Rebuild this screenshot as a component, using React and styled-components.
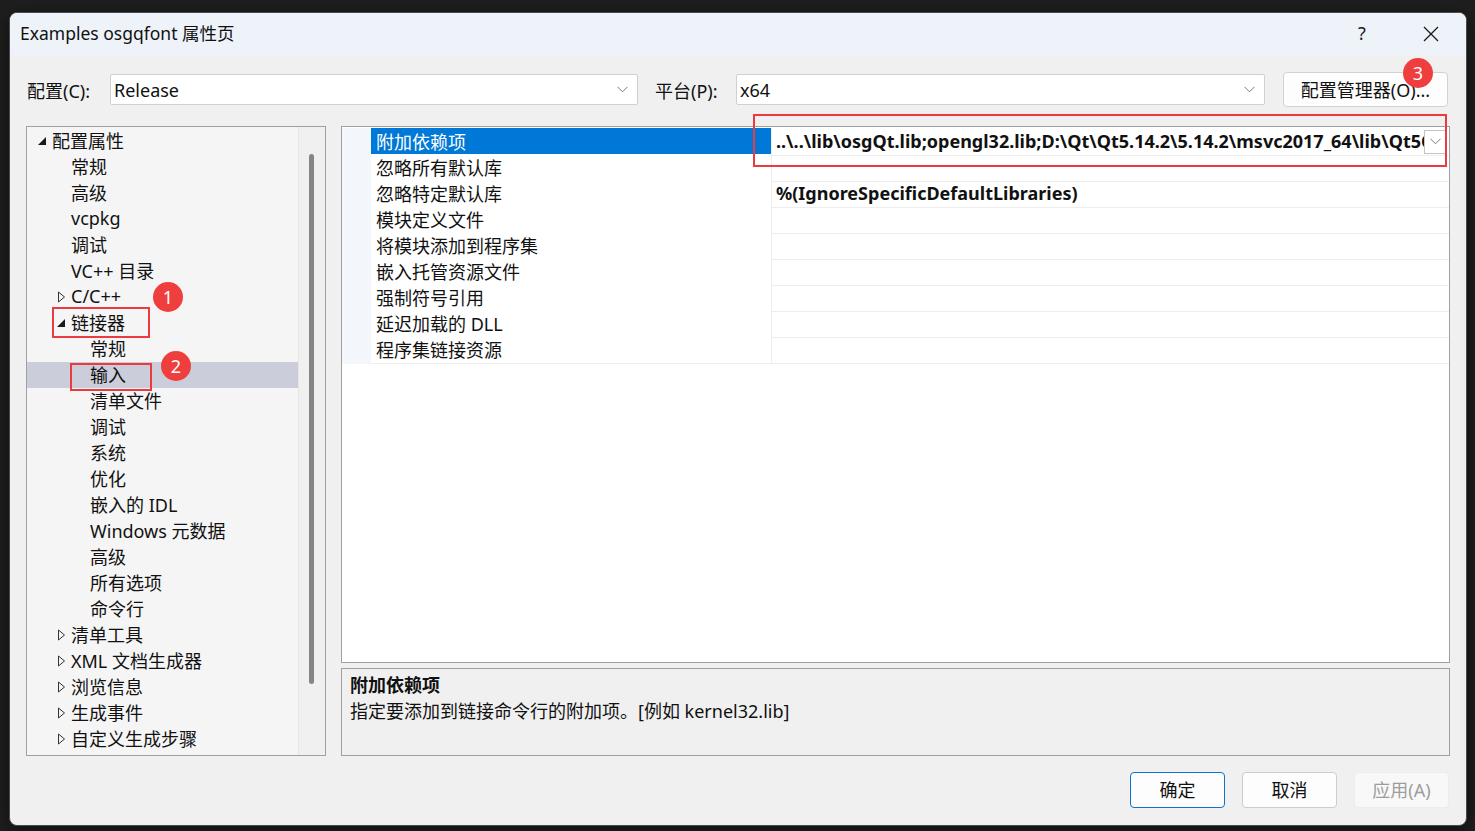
import React from 'react';
import styled, { createGlobalStyle } from 'styled-components';

const GlobalStyle = createGlobalStyle`
  html, body {
    margin: 0;
    padding: 0;
    background: #1e1e1e;
  }
  body {
    width: 1475px;
    height: 831px;
    overflow: hidden;
    font-family: "Noto Sans", "Noto Sans CJK SC", sans-serif;
    font-size: 18px;
    color: #1a1a1a;
  }
  * { box-sizing: border-box; }
`;

const treeItems = [
  { label: '配置属性', level: 0, arrow: 'open' },
  { label: '常规', level: 1 },
  { label: '高级', level: 1 },
  { label: 'vcpkg', level: 1 },
  { label: '调试', level: 1 },
  { label: 'VC++ 目录', level: 1 },
  { label: 'C/C++', level: 1, arrow: 'closed' },
  { label: '链接器', level: 1, arrow: 'open' },
  { label: '常规', level: 2 },
  { label: '输入', level: 2, selected: true },
  { label: '清单文件', level: 2 },
  { label: '调试', level: 2 },
  { label: '系统', level: 2 },
  { label: '优化', level: 2 },
  { label: '嵌入的 IDL', level: 2 },
  { label: 'Windows 元数据', level: 2 },
  { label: '高级', level: 2 },
  { label: '所有选项', level: 2 },
  { label: '命令行', level: 2 },
  { label: '清单工具', level: 1, arrow: 'closed' },
  { label: 'XML 文档生成器', level: 1, arrow: 'closed' },
  { label: '浏览信息', level: 1, arrow: 'closed' },
  { label: '生成事件', level: 1, arrow: 'closed' },
  { label: '自定义生成步骤', level: 1, arrow: 'closed' },
];

const properties = [
  { name: '附加依赖项', value: '..\\..\\lib\\osgQt.lib;opengl32.lib;D:\\Qt\\Qt5.14.2\\5.14.2\\msvc2017_64\\lib\\Qt5OpenGL.lib;D:\\Qt\\Qt5.14.2\\lib', selected: true },
  { name: '忽略所有默认库', value: '' },
  { name: '忽略特定默认库', value: '%(IgnoreSpecificDefaultLibraries)' },
  { name: '模块定义文件', value: '' },
  { name: '将模块添加到程序集', value: '' },
  { name: '嵌入托管资源文件', value: '' },
  { name: '强制符号引用', value: '' },
  { name: '延迟加载的 DLL', value: '' },
  { name: '程序集链接资源', value: '' },
];

const Chevron = () => (
  <svg width="11" height="7" viewBox="0 0 11 7">
    <path d="M0.5 0.8 L5.5 5.8 L10.5 0.8" fill="none" stroke="#7a7a7a" strokeWidth="1" />
  </svg>
);

const TreeArrow = ({ type }) => {
  if (type === 'open') {
    return (
      <svg width="10" height="10" viewBox="0 0 10 10">
        <polygon points="8,1 8,9 0,9" fill="#1a1a1a" />
      </svg>
    );
  }
  return (
    <svg width="10" height="12" viewBox="0 0 10 12">
      <polygon points="1.5,1 7.5,6 1.5,11" fill="none" stroke="#333" strokeWidth="1" />
    </svg>
  );
};

const App = () => {
  return (
    <Screen>
      <GlobalStyle />
      <Dialog>
        <TitleBar>
          <Title>Examples osgqfont 属性页</Title>
          <HelpButton>?</HelpButton>
          <CloseButton>
            <svg width="16" height="16" viewBox="0 0 16 16">
              <path d="M1 1 L15 15 M15 1 L1 15" stroke="#1a1a1a" strokeWidth="1.3" />
            </svg>
          </CloseButton>
        </TitleBar>

        <ConfigRow>
          <FieldLabel $width={83}>配置(C):</FieldLabel>
          <Select $width={528}>
            <span>Release</span>
            <Chevron />
          </Select>
          <FieldLabel $width={81} $gap={17}>平台(P):</FieldLabel>
          <Select $width={529}>
            <span>x64</span>
            <Chevron />
          </Select>
          <ManagerButton>配置管理器(O)...</ManagerButton>
        </ConfigRow>

        <Main>
          <TreePanel>
            <TreeList>
              {treeItems.map((item, i) => (
                <TreeRow key={i} $level={item.level} $selected={item.selected}>
                  <ArrowBox>{item.arrow && <TreeArrow type={item.arrow} />}</ArrowBox>
                  <span>{item.label}</span>
                </TreeRow>
              ))}
            </TreeList>
            <ScrollTrack>
              <ScrollThumb />
            </ScrollTrack>
          </TreePanel>

          <RightColumn>
            <GridPanel>
              {properties.map((p, i) => (
                <GridRow key={i}>
                  <Gutter />
                  <NameCell $selected={p.selected}>{p.name}</NameCell>
                  <ValueCell>
                    <ValueText>{p.value}</ValueText>
                    {p.selected && (
                      <DropButton>
                        <Chevron />
                      </DropButton>
                    )}
                  </ValueCell>
                </GridRow>
              ))}
            </GridPanel>
            <DescPanel>
              <DescTitle>附加依赖项</DescTitle>
              <DescText>指定要添加到链接命令行的附加项。[例如 kernel32.lib]</DescText>
            </DescPanel>
          </RightColumn>
        </Main>

        <Footer>
          <DialogButton $variant="primary">确定</DialogButton>
          <DialogButton>取消</DialogButton>
          <DialogButton $variant="disabled">应用(A)</DialogButton>
        </Footer>
      </Dialog>

      <RedBox $x={52} $y={307} $w={98} $h={31} />
      <RedBox $x={70} $y={363} $w={82} $h={28} />
      <RedBox $x={753} $y={114} $w={694} $h={53} />
      <Badge $cx={168} $cy={297}>1</Badge>
      <Badge $cx={176} $cy={366}>2</Badge>
      <Badge $cx={1418} $cy={73}>3</Badge>
    </Screen>
  );
};

const Screen = styled.div`
  position: relative;
  width: 1475px;
  height: 831px;
  padding: 12px 0 0 9px;
  background: #1e1e1e;
`;

const Dialog = styled.div`
  width: 1458px;
  height: 814px;
  border: 1px solid #4b4b4b;
  border-radius: 8px;
  background: #f0f0f0;
  display: flex;
  flex-direction: column;
  overflow: hidden;
  box-shadow: 0 4px 16px rgba(0, 0, 0, 0.5);
`;

const TitleBar = styled.div`
  height: 42px;
  background: #eef3f9;
  display: flex;
  align-items: center;
  padding: 0 0 3px 10px;
`;

const Title = styled.div`
  flex: 1;
  font-size: 17.5px;
  color: #111;
`;

const HelpButton = styled.div`
  width: 46px;
  display: flex;
  align-items: center;
  justify-content: center;
  font-size: 18px;
  color: #222;
  margin-right: 11px;
`;

const CloseButton = styled.div`
  width: 70px;
  display: flex;
  align-items: center;
  justify-content: center;
  padding-top: 2px;
`;

const ConfigRow = styled.div`
  margin-top: 17px;
  height: 35px;
  display: flex;
  align-items: center;
  padding-left: 17px;
`;

const FieldLabel = styled.div`
  width: ${(p) => p.$width}px;
  margin-left: ${(p) => p.$gap || 0}px;
  color: #111;
`;

const Select = styled.div`
  width: ${(p) => p.$width}px;
  height: 31px;
  background: #fff;
  border: 1px solid #d0d0d0;
  border-radius: 2px;
  display: flex;
  align-items: center;
  justify-content: space-between;
  padding: 0 9px 0 3px;
  color: #111;
`;

const ManagerButton = styled.div`
  margin-left: 18px;
  width: 165px;
  height: 35px;
  background: #fdfdfd;
  border: 1px solid #d2d2d2;
  border-radius: 4px;
  display: flex;
  align-items: center;
  justify-content: center;
  padding-bottom: 2px;
  color: #111;
`;

const Main = styled.div`
  margin-top: 19px;
  height: 630px;
  display: flex;
  gap: 15px;
  padding: 0 16px;
`;

const TreePanel = styled.div`
  width: 300px;
  height: 630px;
  border: 1px solid #a0a0a0;
  background: #f5f5f5;
  display: flex;
`;

const TreeList = styled.div`
  flex: 1;
  padding-top: 1px;
`;

const TreeRow = styled.div`
  height: 26px;
  display: flex;
  align-items: center;
  padding-left: ${(p) => 11 + p.$level * 19}px;
  padding-bottom: 2px;
  background: ${(p) => (p.$selected ? '#cbcdda' : 'transparent')};
  color: #111;
  white-space: nowrap;
`;

const ArrowBox = styled.span`
  width: 14px;
  height: 22px;
  display: flex;
  align-items: center;
  justify-content: flex-start;
  flex-shrink: 0;
  padding-top: 2px;
`;

const ScrollTrack = styled.div`
  width: 27px;
  background: #f0f0f0;
  border-left: 1px solid #e6e6e6;
  padding-top: 27px;
  padding-left: 10px;
`;

const ScrollThumb = styled.div`
  width: 5px;
  height: 530px;
  border-radius: 3px;
  background: #858585;
`;

const RightColumn = styled.div`
  flex: 1;
  display: flex;
  flex-direction: column;
  gap: 5px;
`;

const GridPanel = styled.div`
  height: 537px;
  border: 1px solid #a0a0a0;
  background: #fff;
  padding-top: 1px;
`;

const GridRow = styled.div`
  height: 26px;
  display: grid;
  grid-template-columns: 29px 400px 1fr;
`;

const Gutter = styled.div`
  background: #f3f6fb;
`;

const NameCell = styled.div`
  display: flex;
  align-items: center;
  padding: 0 0 1px 5px;
  white-space: nowrap;
  background: ${(p) => (p.$selected ? '#0078d7' : '#fff')};
  color: ${(p) => (p.$selected ? '#fff' : '#111')};
  border-bottom: 1px solid ${(p) => (p.$selected ? '#0078d7' : '#ededed')};
`;

const ValueCell = styled.div`
  display: flex;
  align-items: center;
  min-width: 0;
  padding-left: 4px;
  border-left: 1px solid #ededed;
  border-bottom: 1px solid #ededed;
`;

const ValueText = styled.div`
  flex: 1;
  min-width: 0;
  overflow: hidden;
  white-space: nowrap;
  font-weight: 700;
  padding-bottom: 1px;
  color: #111;
`;

const DropButton = styled.div`
  width: 23px;
  height: 24px;
  margin-right: 2px;
  background: #fff;
  border: 1px solid #c4c4c4;
  display: flex;
  align-items: center;
  justify-content: center;
  flex-shrink: 0;
`;

const DescPanel = styled.div`
  height: 88px;
  border: 1px solid #a0a0a0;
  background: #f0f0f0;
  padding: 3px 8px;
`;

const DescTitle = styled.div`
  font-weight: 700;
  line-height: 26px;
  color: #111;
`;

const DescText = styled.div`
  line-height: 26px;
  color: #111;
`;

const Footer = styled.div`
  margin-top: 16px;
  display: flex;
  justify-content: flex-end;
  gap: 17px;
  padding-right: 17px;
`;

const DialogButton = styled.div`
  width: 95px;
  height: 36px;
  border-radius: 4px;
  display: flex;
  align-items: center;
  justify-content: center;
  padding-bottom: 2px;
  background: ${(p) => (p.$variant === 'disabled' ? '#f8f8f8' : '#fdfdfd')};
  color: ${(p) => (p.$variant === 'disabled' ? '#9d9d9d' : '#111')};
  border: 1px solid
    ${(p) =>
      p.$variant === 'primary' ? '#0a74d0' : p.$variant === 'disabled' ? '#ececec' : '#cccccc'};
`;

const RedBox = styled.div`
  position: absolute;
  left: ${(p) => p.$x}px;
  top: ${(p) => p.$y}px;
  width: ${(p) => p.$w}px;
  height: ${(p) => p.$h}px;
  border: 2px solid #ec3b3f;
  pointer-events: none;
`;

const Badge = styled.div`
  position: absolute;
  left: ${(p) => p.$cx - 15}px;
  top: ${(p) => p.$cy - 15}px;
  width: 30px;
  height: 30px;
  border-radius: 50%;
  background: #ef3e3e;
  color: #fff;
  font-size: 18px;
  display: flex;
  align-items: center;
  justify-content: center;
`;

export default App;
